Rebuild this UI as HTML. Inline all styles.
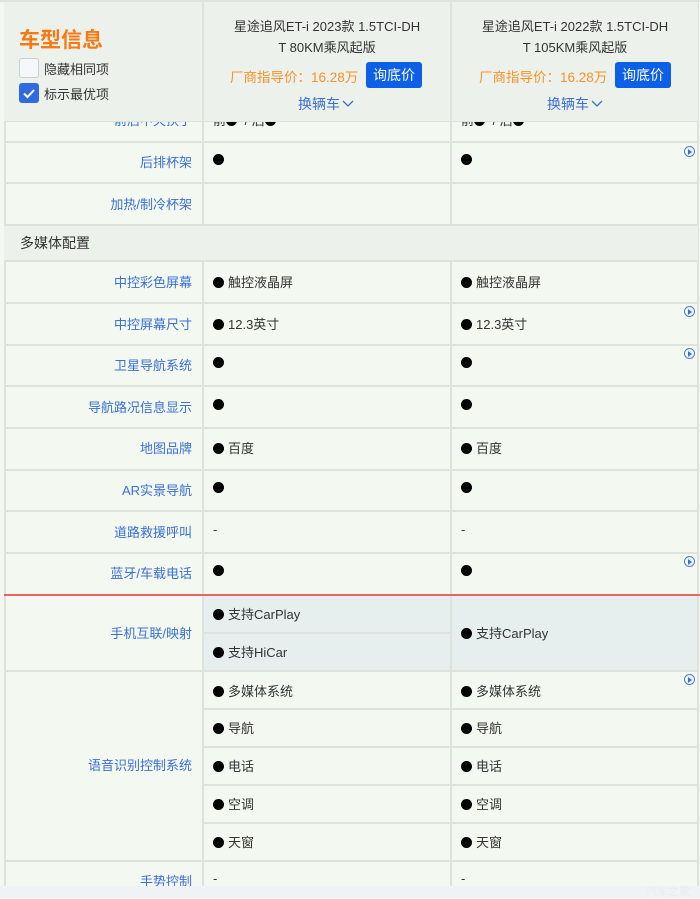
<!DOCTYPE html>
<html><head><meta charset="utf-8"><style>
*{margin:0;padding:0;box-sizing:border-box}
body{width:700px;height:898px;overflow:hidden;background:#f3f8f1;font-family:"Liberation Sans","Noto Sans CJK SC",sans-serif;position:relative}
.a{position:absolute}
.hl{position:absolute;left:4px;width:694px;height:2px;background:#dde3dc}
.vl{position:absolute;width:2px;background:#dde3dc}
.lab{position:absolute;left:4px;width:188px;text-align:right;color:#3b6fd4;font-size:13px}
.val{position:absolute;font-size:13px;color:#333}
.d{display:inline-block;width:11px;height:11px;border-radius:50%;background:#000;margin-right:4px;vertical-align:-1px}
.ic{position:absolute;width:11px;height:11px;border:1.5px solid #4a7fe0;border-radius:50%;left:684px}
.ic:after{content:"";position:absolute;left:3px;top:1.5px;border-left:4px solid #3b6fd4;border-top:3px solid transparent;border-bottom:3px solid transparent}
</style></head><body>
<div class="a" style="left:4px;top:0;width:2px;height:886px;background:#dde3dc"></div>
<div class="a" style="left:697px;top:0;width:2px;height:886px;background:#dde3dc"></div>
<div class="vl" style="left:202px;top:0;height:886px"></div>
<div class="vl" style="left:450px;top:0;height:886px"></div>

<div class="val" style="left:213px;top:110px">前<b class="d"></b> / 后<b class="d"></b></div>
<div class="val" style="left:461px;top:110px">前<b class="d"></b> / 后<b class="d"></b></div>
<div class="lab" style="top:110px">前后中央扶手</div>

<div class="a" style="left:4px;top:0;width:694px;height:122px;background:#edf1ec;border-bottom:1px solid #dde3dc"></div>
<div class="a" style="left:0;top:0;width:700px;height:2px;background:#dfe3df"></div>
<div class="vl" style="left:202px;top:0;height:122px"></div>
<div class="vl" style="left:450px;top:0;height:122px"></div>
<div class="a" style="left:19px;top:24px;font-size:21px;font-weight:bold;color:#f57a14">车型信息</div>
<div class="a" style="left:19px;top:58px;width:20px;height:20px;border:1px solid #c8d0d8;border-radius:3px;background:#f5f7f8"></div>
<div class="a" style="left:44px;top:59px;font-size:13px;color:#333">隐藏相同项</div>
<div class="a" style="left:19px;top:83px;width:20px;height:20px;border-radius:3px;background:#2f6bdc"></div>
<svg class="a" style="left:19px;top:83px" width="20" height="20"><path d="M5 10.5l3.5 3.5 6.5-7" stroke="#fff" stroke-width="2" fill="none"/></svg>
<div class="a" style="left:44px;top:84px;font-size:13px;color:#333">标示最优项</div>

<div class="a" style="left:204px;top:16px;width:246px;text-align:center;font-size:13px;line-height:21px;color:#333">星途追风ET-i 2023款 1.5TCI-DH<br>T 80KM乘风起版</div>
<div class="a" style="left:230px;top:66px;font-size:13.5px;color:#f5932a">厂商指导价：16.28万</div>
<div class="a" style="left:366px;top:62px;width:56px;height:26px;background:#0d5fe8;border-radius:3px;color:#fff;font-size:14px;text-align:center;line-height:26px">询底价</div>
<div class="a" style="left:298px;top:94px;font-size:14px;color:#3b6fd4">换辆车</div>
<svg class="a" style="left:342px;top:98px" width="12" height="10"><path d="M1 3l5 5 5-5" stroke="#3b6fd4" stroke-width="1.3" fill="none"/></svg>

<div class="a" style="left:452px;top:16px;width:246px;text-align:center;font-size:13px;line-height:21px;color:#333">星途追风ET-i 2022款 1.5TCI-DH<br>T 105KM乘风起版</div>
<div class="a" style="left:479px;top:66px;font-size:13.5px;color:#f5932a">厂商指导价：16.28万</div>
<div class="a" style="left:615px;top:62px;width:56px;height:26px;background:#0d5fe8;border-radius:3px;color:#fff;font-size:14px;text-align:center;line-height:26px">询底价</div>
<div class="a" style="left:547px;top:94px;font-size:14px;color:#3b6fd4">换辆车</div>
<svg class="a" style="left:591px;top:98px" width="12" height="10"><path d="M1 3l5 5 5-5" stroke="#3b6fd4" stroke-width="1.3" fill="none"/></svg>

<div class="hl" style="top:141px"></div>
<div class="hl" style="top:182px"></div>
<div class="hl" style="top:224px"></div>
<div class="a" style="left:4px;top:226px;width:694px;height:35px;background:#edf1ec"></div>
<div class="hl" style="top:260px"></div>
<div class="hl" style="top:302px"></div>
<div class="hl" style="top:344px"></div>
<div class="hl" style="top:385px"></div>
<div class="hl" style="top:427px"></div>
<div class="hl" style="top:469px"></div>
<div class="hl" style="top:510px"></div>
<div class="hl" style="top:552px"></div>
<div class="a" style="left:4px;top:594px;width:696px;height:2px;background:#e96565"></div>
<div class="a" style="left:204px;top:596px;width:493px;height:74px;background:#e6eeee"></div>
<div class="a" style="left:204px;top:632px;width:246px;height:2px;background:#dde3dc"></div>
<div class="vl" style="left:450px;top:596px;height:74px"></div>
<div class="hl" style="top:670px"></div>
<div class="a" style="left:204px;top:708px;width:494px;height:2px;background:#dde3dc"></div>
<div class="a" style="left:204px;top:746px;width:494px;height:2px;background:#dde3dc"></div>
<div class="a" style="left:204px;top:784px;width:494px;height:2px;background:#dde3dc"></div>
<div class="a" style="left:204px;top:822px;width:494px;height:2px;background:#dde3dc"></div>
<div class="hl" style="top:860px"></div>

<div class="lab" style="top:152px">后排杯架</div>
<div class="val" style="left:213px;top:152px"><b class="d"></b></div><div class="val" style="left:461px;top:152px"><b class="d"></b></div>
<div class="lab" style="top:194px">加热/制冷杯架</div>
<div class="a" style="left:20px;top:233px;font-size:14px;color:#333">多媒体配置</div>

<div class="lab" style="top:272px">中控彩色屏幕</div>
<div class="val" style="left:213px;top:272px"><b class="d"></b>触控液晶屏</div><div class="val" style="left:461px;top:272px"><b class="d"></b>触控液晶屏</div>
<div class="lab" style="top:314px">中控屏幕尺寸</div>
<div class="val" style="left:213px;top:314px"><b class="d"></b>12.3英寸</div><div class="val" style="left:461px;top:314px"><b class="d"></b>12.3英寸</div>
<div class="lab" style="top:355px">卫星导航系统</div>
<div class="val" style="left:213px;top:355px"><b class="d"></b></div><div class="val" style="left:461px;top:355px"><b class="d"></b></div>
<div class="lab" style="top:397px">导航路况信息显示</div>
<div class="val" style="left:213px;top:397px"><b class="d"></b></div><div class="val" style="left:461px;top:397px"><b class="d"></b></div>
<div class="lab" style="top:438px">地图品牌</div>
<div class="val" style="left:213px;top:438px"><b class="d"></b>百度</div><div class="val" style="left:461px;top:438px"><b class="d"></b>百度</div>
<div class="lab" style="top:480px">AR实景导航</div>
<div class="val" style="left:213px;top:480px"><b class="d"></b></div><div class="val" style="left:461px;top:480px"><b class="d"></b></div>
<div class="lab" style="top:522px">道路救援呼叫</div>
<div class="val" style="left:213px;top:522px">-</div><div class="val" style="left:461px;top:522px">-</div>
<div class="lab" style="top:563px">蓝牙/车载电话</div>
<div class="val" style="left:213px;top:563px"><b class="d"></b></div><div class="val" style="left:461px;top:563px"><b class="d"></b></div>

<div class="lab" style="top:623px">手机互联/映射</div>
<div class="val" style="left:213px;top:604px"><b class="d"></b>支持CarPlay</div>
<div class="val" style="left:213px;top:642px"><b class="d"></b>支持HiCar</div>
<div class="val" style="left:461px;top:623px"><b class="d"></b>支持CarPlay</div>

<div class="lab" style="top:755px">语音识别控制系统</div>
<div class="val" style="left:213px;top:681px"><b class="d"></b>多媒体系统</div><div class="val" style="left:461px;top:681px"><b class="d"></b>多媒体系统</div>
<div class="val" style="left:213px;top:718px"><b class="d"></b>导航</div><div class="val" style="left:461px;top:718px"><b class="d"></b>导航</div>
<div class="val" style="left:213px;top:756px"><b class="d"></b>电话</div><div class="val" style="left:461px;top:756px"><b class="d"></b>电话</div>
<div class="val" style="left:213px;top:794px"><b class="d"></b>空调</div><div class="val" style="left:461px;top:794px"><b class="d"></b>空调</div>
<div class="val" style="left:213px;top:832px"><b class="d"></b>天窗</div><div class="val" style="left:461px;top:832px"><b class="d"></b>天窗</div>

<div class="lab" style="top:871px">手势控制</div>
<div class="val" style="left:213px;top:871px">-</div><div class="val" style="left:461px;top:871px">-</div>

<div class="ic" style="top:146px"></div>
<div class="ic" style="top:306px"></div>
<div class="ic" style="top:348px"></div>
<div class="ic" style="top:556px"></div>
<div class="ic" style="top:674px"></div>

<div class="a" style="left:0;top:886px;width:700px;height:12px;background:#f0f3f5"></div>
<div class="a" style="left:646px;top:883px;font-size:11px;color:#e8ecee">汽车之家</div>
</body></html>
